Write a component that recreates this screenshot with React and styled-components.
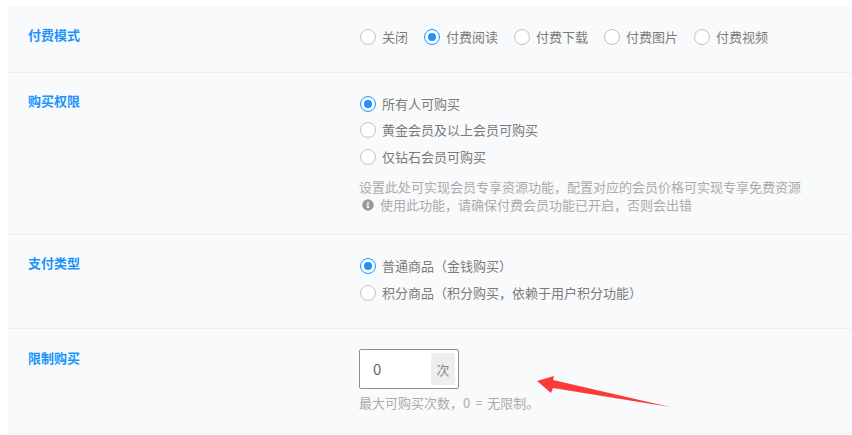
import React from "react";
import styled, { createGlobalStyle } from "styled-components";

const Global = createGlobalStyle`
  html, body { margin: 0; padding: 0; background: #fff; }
  body { font-family: "Noto Sans CJK SC", "Liberation Sans", sans-serif; font-size: 13px; color: #666; overflow: hidden; }
`;

const Panel = styled.div`
  position: relative;
  width: 844px;
  margin: 6px 0 0 8px;
  background: #f9fafc;
`;

const Row = styled.section`
  display: grid;
  grid-template-columns: 332px 1fr;
  height: ${(p) => p.$height}px;
  box-sizing: border-box;
  border-bottom: 1px solid #eeeff2;
  padding: 19px 0 0 20px;
`;

const Label = styled.div`
  font-size: 13px;
  font-weight: 700;
  line-height: 20px;
  color: #1a94fc;
  margin-top: ${(p) => p.$offset || 0}px;
`;

const Inline = styled.div`
  display: flex;
  gap: 16px;
  margin-top: 2px;
`;

const Stack = styled.div`
  display: flex;
  flex-direction: column;
  gap: ${(p) => p.$gap || 7}px;
  margin-top: ${(p) => p.$top || 0}px;
`;

const Option = styled.label`
  display: flex;
  align-items: center;
  gap: 6px;
  height: 20px;
  line-height: 20px;
  color: #7a7a7a;
  white-space: nowrap;
`;

const Dot = styled.span`
  box-sizing: border-box;
  width: 16px;
  height: 16px;
  border-radius: 50%;
  background: #fff;
  border: ${(p) => (p.$on ? "1.5px solid #1a94fc" : "1px solid #c4c4c4")};
  display: flex;
  align-items: center;
  justify-content: center;
  &::after {
    content: "";
    display: ${(p) => (p.$on ? "block" : "none")};
    width: 8px;
    height: 8px;
    border-radius: 50%;
    background: #1a94fc;
  }
`;

const Help = styled.div`
  color: #ababab;
  font-size: 13px;
  line-height: 18px;
  margin-top: ${(p) => p.$top || 0}px;
  margin-left: -1px;
  white-space: nowrap;
  word-spacing: ${(p) => p.$wordGap || 0}px;
  display: ${(p) => (p.$flex ? "flex" : "block")};
  align-items: center;
  gap: 6px;
`;

const InfoIcon = styled.svg`
  width: 12px;
  height: 12px;
  margin-left: 3px;
  flex: none;
`;

const Field = styled.div`
  box-sizing: border-box;
  width: 100px;
  height: 40px;
  margin: 1px 0 0 -1px;
  background: #fff;
  border: 1px solid #8f8f8f;
  border-radius: 2px;
  padding: 3px;
  display: flex;
  align-items: stretch;
  justify-content: space-between;
`;

const Value = styled.span`
  font-size: 15px;
  line-height: 32px;
  padding-left: 10px;
  color: #666;
`;

const Unit = styled.span`
  width: 24px;
  background: #eeeeee;
  border-radius: 2px;
  font-size: 13px;
  color: #888;
  text-align: center;
  line-height: 33px;
`;

const Arrow = styled.svg`
  position: absolute;
  left: 521px;
  top: 364px;
  width: 141px;
  height: 37px;
  overflow: visible;
`;

const Radio = ({ on, children }) => (
  <Option>
    <Dot $on={on} />
    {children}
  </Option>
);

export default function App() {
  return (
    <>
      <Global />
      <Panel>
        <Row $height={67}>
          <Label>付费模式</Label>
          <Inline>
            <Radio>关闭</Radio>
            <Radio on>付费阅读</Radio>
            <Radio>付费下载</Radio>
            <Radio>付费图片</Radio>
            <Radio>付费视频</Radio>
          </Inline>
        </Row>
        <Row $height={162}>
          <Label $offset={-1}>购买权限</Label>
          <Stack $top={2}>
            <Stack $gap={6.4}>
              <Radio on>所有人可购买</Radio>
              <Radio>黄金会员及以上会员可购买</Radio>
              <Radio>仅钻石会员可购买</Radio>
            </Stack>
            <div>
              <Help $top={4}>设置此处可实现会员专享资源功能，配置对应的会员价格可实现专享免费资源</Help>
              <Help $flex>
                <InfoIcon viewBox="0 0 512 512" aria-hidden="true">
                  <path
                    fill="#9a9a9a"
                    d="M256 8a248 248 0 1 0 0 496 248 248 0 0 0 0-496zm0 110a42 42 0 1 1 0 84 42 42 0 0 1 0-84zm56 254c0 7-5 12-12 12h-88c-7 0-12-5-12-12v-24c0-7 5-12 12-12h12v-64h-12c-7 0-12-5-12-12v-24c0-7 5-12 12-12h64c7 0 12 5 12 12v100h12c7 0 12 5 12 12z"
                  />
                </InfoIcon>
                使用此功能，请确保付费会员功能已开启，否则会出错
              </Help>
            </div>
          </Stack>
        </Row>
        <Row $height={94}>
          <Label $offset={-1}>支付类型</Label>
          <Stack $top={2}>
            <Radio on>普通商品（金钱购买）</Radio>
            <Radio>积分商品（积分购买，依赖于用户积分功能）</Radio>
          </Stack>
        </Row>
        <Row $height={105}>
          <Label>限制购买</Label>
          <div>
            <Field>
              <Value>0</Value>
              <Unit>次</Unit>
            </Field>
            <Help $top={5} $wordGap={2}>最大可购买次数，0 = 无限制。</Help>
          </div>
        </Row>
        <Arrow viewBox="529 370 141 37" aria-hidden="true">
          <polygon
            fill="#fb3a3a"
            points="537,381 554,376 553,380 670,407 553,388 551,393"
          />
        </Arrow>
      </Panel>
    </>
  );
}
